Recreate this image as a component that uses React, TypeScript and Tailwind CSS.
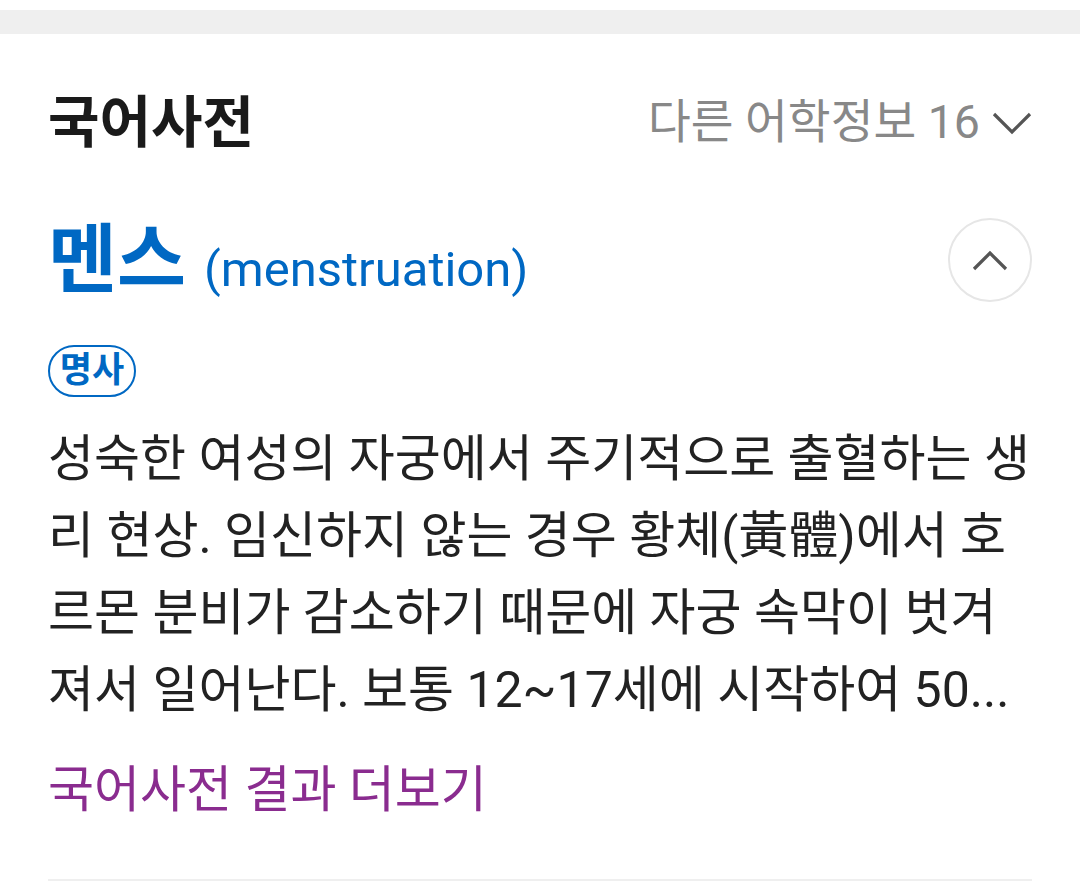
import React from "react";

const font = { fontFamily: 'Roboto, "Noto Sans CJK KR", sans-serif' };

const lines = [
  "성숙한 여성의 자궁에서 주기적으로 출혈하는 생",
  "리 현상. 임신하지 않는 경우 황체(黃體)에서 호",
  "르몬 분비가 감소하기 때문에 자궁 속막이 벗겨",
  "져서 일어난다. 보통 12~17세에 시작하여 50...",
];

export default function App() {
  return (
    <div className="w-full h-[881px] overflow-hidden bg-white" style={font}>
      <div className="h-[10px]" />
      <div className="h-[24px] bg-[#efefef]" />
      <section className="px-[48px] pt-[49px]">
        {/* section header */}
        <div className="flex h-[80px] items-center justify-between">
          <h2 className="text-[56px] font-bold text-[#1a1a1a]">국어사전</h2>
          <button className="flex items-center gap-[12px] text-[46.5px] text-[#888888]">
            <span>다른 어학정보 16</span>
            <svg width="40" height="24" viewBox="0 0 40 24" fill="none">
              <path d="M2 3 L20 21 L38 3" stroke="#555" strokeWidth="3.2" />
            </svg>
          </button>
        </div>

        {/* headword */}
        <div className="mt-[55px] flex h-[84px] items-center justify-between">
          <div className="flex items-baseline gap-[18px] text-[#0068c3]">
            <span className="text-[75px] font-bold">멘스</span>
            <span className="text-[49px]">(menstruation)</span>
          </div>
          <button className="flex h-[84px] w-[84px] items-center justify-center rounded-full border-2 border-[#e6e6e6]">
            <svg width="36" height="22" viewBox="0 0 36 22" fill="none">
              <path d="M2 20 L18 4 L34 20" stroke="#555" strokeWidth="3.2" />
            </svg>
          </button>
        </div>

        {/* part of speech */}
        <div className="mt-[43px] flex">
          <span className="flex h-[52px] w-[88px] items-center justify-center rounded-full border-[2.5px] border-[#0068c3] text-[35px] font-bold text-[#0068c3]">
            명사
          </span>
        </div>

        {/* definition */}
        <div className="mt-[24px] text-[50px] leading-[77px] text-[#222222]">
          {lines.map((l) => (
            <div key={l} className="whitespace-nowrap">{l}</div>
          ))}
        </div>

        <div className="mt-[31px] h-[60px] text-[50px] leading-[60px] text-[#8a2c8f]">
          국어사전 결과 더보기
        </div>

        <div className="mt-[59px] h-[2px] bg-[#efefef]" />
      </section>
    </div>
  );
}
